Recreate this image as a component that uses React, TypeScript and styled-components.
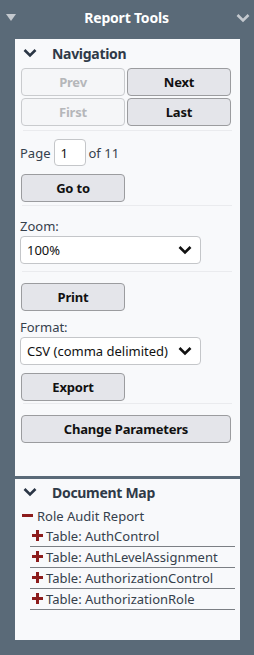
import React from 'react';
import styled, { createGlobalStyle } from 'styled-components';

const GlobalStyle = createGlobalStyle`
  html, body {
    margin: 0;
    padding: 0;
    background: #5a6a78;
  }
  body {
    font-family: "Noto Sans", "Open Sans", sans-serif;
    width: 254px;
    height: 655px;
    overflow: hidden;
  }
`;

const Sidebar = styled.div`
  width: 254px;
  height: 655px;
  background: #5a6a78;
  display: flex;
  flex-direction: column;
`;

const TopBar = styled.div`
  height: 36px;
  display: flex;
  align-items: center;
  justify-content: space-between;
  padding: 0 4px 0 5px;
  color: #ffffff;
`;

const TopTitle = styled.div`
  font-size: 14px;
  font-weight: 700;
  letter-spacing: -0.2px;
  margin-top: -1px;
`;

const Panel = styled.div<{ $height: number; $pt: number }>`
  margin: 0 14px 0 15px;
  height: ${(p) => p.$height}px;
  background: #f8f9fb;
  padding: ${(p) => p.$pt}px 6px 0 5px;
  box-sizing: border-box;
  display: flex;
  flex-direction: column;
  color: #35404c;
  font-size: 13px;
`;

const PanelGap = styled.div`
  height: 3px;
`;

const SectionHead = styled.div`
  display: flex;
  align-items: center;
  height: 20px;
  gap: 15px;
  padding-left: 3px;
  font-size: 14px;
  font-weight: 700;
  color: #2f3a48;
  letter-spacing: -0.3px;
`;

const ButtonGrid = styled.div`
  display: grid;
  grid-template-columns: 104px 104px;
  column-gap: 2px;
  row-gap: 2px;
  padding: 5px 0 0 1px;
`;

const Btn = styled.button<{ $disabled?: boolean; $wide?: boolean }>`
  width: ${(p) => (p.$wide ? '210px' : '104px')};
  height: 28px;
  box-sizing: border-box;
  border-radius: 4px;
  border: 1px solid ${(p) => (p.$disabled ? '#c9cbce' : '#9b9c9f')};
  background: ${(p) => (p.$disabled ? '#f5f6f8' : '#e4e5ea')};
  color: ${(p) => (p.$disabled ? '#b5b7ba' : '#111111')};
  font-family: inherit;
  font-size: 13px;
  font-weight: 700;
  padding: 0;
  letter-spacing: -0.2px;
`;

const Divider = styled.div`
  height: 1px;
  background: #eaebee;
  margin: 0 2px;
  align-self: stretch;
`;

const Block = styled.div<{ $pt: number; $pb: number }>`
  padding: ${(p) => p.$pt}px 0 ${(p) => p.$pb}px 1px;
  display: flex;
  flex-direction: column;
  align-items: flex-start;
`;

const Spacer = styled.div<{ $h: number }>`
  height: ${(p) => p.$h}px;
`;

const PageRow = styled.div`
  display: flex;
  align-items: center;
  gap: 3px;
  margin-left: -1px;
`;

const PageInput = styled.div`
  width: 32px;
  height: 27px;
  box-sizing: border-box;
  border: 1px solid #c4c6c9;
  border-radius: 4px;
  background: #ffffff;
  color: #111;
  padding: 4px 0 0 6px;
`;

const Label = styled.div<{ $mt?: number }>`
  margin: ${(p) => p.$mt ?? 0}px 0 1px -1px;
  line-height: 18px;
`;

const Select = styled.div`
  width: 181px;
  height: 28px;
  box-sizing: border-box;
  border: 1px solid #c4c6c9;
  border-radius: 4px;
  background: #ffffff;
  color: #111;
  margin-left: -1px;
  display: flex;
  align-items: center;
  justify-content: space-between;
  padding: 0 8px 0 6px;
`;

const Tree = styled.div`
  padding: 3px 0 0 2px;
  display: flex;
  flex-direction: column;
`;

const TreeRoot = styled.div`
  display: flex;
  align-items: center;
  gap: 4px;
  height: 21px;
`;

const TreeItem = styled.div`
  margin-left: 8px;
  padding: 0 0 1px 2px;
  height: 21px;
  border-bottom: 1px solid #7b7f84;
  display: flex;
  align-items: center;
  gap: 3px;
  width: 205px;
  box-sizing: border-box;
`;

const Chevron = ({ color = '#2b3645' }: { color?: string }) => (
  <svg width="14" height="10" viewBox="0 0 14 10">
    <path d="M1.5 2 L7 7.5 L12.5 2" fill="none" stroke={color} strokeWidth="2.6" />
  </svg>
);

const Plus = () => (
  <svg width="11" height="11" viewBox="0 0 11 11">
    <rect x="0" y="4" width="11" height="3" fill="#8c1c1c" />
    <rect x="4" y="0" width="3" height="11" fill="#8c1c1c" />
  </svg>
);

const Minus = () => (
  <svg width="11" height="11" viewBox="0 0 11 11">
    <rect x="0" y="4" width="11" height="3" fill="#8c1c1c" />
  </svg>
);

const tables = ['AuthControl', 'AuthLevelAssignment', 'AuthorizationControl', 'AuthorizationRole'];

export default function App() {
  return (
    <Sidebar>
      <GlobalStyle />
      <TopBar>
        <svg width="12" height="10" viewBox="0 0 12 10">
          <path d="M1 1 L11 1 L6 8 Z" fill="#c4c9cf" />
        </svg>
        <TopTitle>Report Tools</TopTitle>
        <Chevron color="#c4c9cf" />
      </TopBar>
      <PanelGap />
      <Panel $height={437} $pt={4}>
        <SectionHead>
          <Chevron />
          <span>Navigation</span>
        </SectionHead>
        <ButtonGrid>
          <Btn $disabled>Prev</Btn>
          <Btn>Next</Btn>
          <Btn $disabled>First</Btn>
          <Btn>Last</Btn>
        </ButtonGrid>
        <Block $pt={4} $pb={4}>
          <Divider />
        </Block>
        <Block $pt={4} $pb={3}>
          <PageRow>
            <span>Page</span>
            <PageInput>1</PageInput>
            <span>of 11</span>
          </PageRow>
          <Spacer $h={8} />
          <Btn>Go to</Btn>
        </Block>
        <Divider />
        <Block $pt={11} $pb={7}>
          <Label>Zoom:</Label>
          <Select>
            <span>100%</span>
            <Chevron color="#111" />
          </Select>
        </Block>
        <Divider />
        <Block $pt={11} $pb={0}>
          <Btn>Print</Btn>
          <Label $mt={7}>Format:</Label>
          <Select>
            <span>CSV (comma delimited)</span>
            <Chevron color="#111" />
          </Select>
          <Spacer $h={8} />
          <Btn>Export</Btn>
        </Block>
        <Block $pt={2} $pb={11}>
          <Divider />
        </Block>
        <Block $pt={0} $pb={0}>
          <Btn $wide>Change Parameters</Btn>
        </Block>
      </Panel>
      <PanelGap />
      <Panel $height={161} $pt={3}>
        <SectionHead>
          <Chevron />
          <span>Document Map</span>
        </SectionHead>
        <Tree>
          <TreeRoot>
            <Minus />
            <span>Role Audit Report</span>
          </TreeRoot>
          {tables.map((t) => (
            <TreeItem key={t}>
              <Plus />
              <span>Table: {t}</span>
            </TreeItem>
          ))}
        </Tree>
      </Panel>
    </Sidebar>
  );
}
